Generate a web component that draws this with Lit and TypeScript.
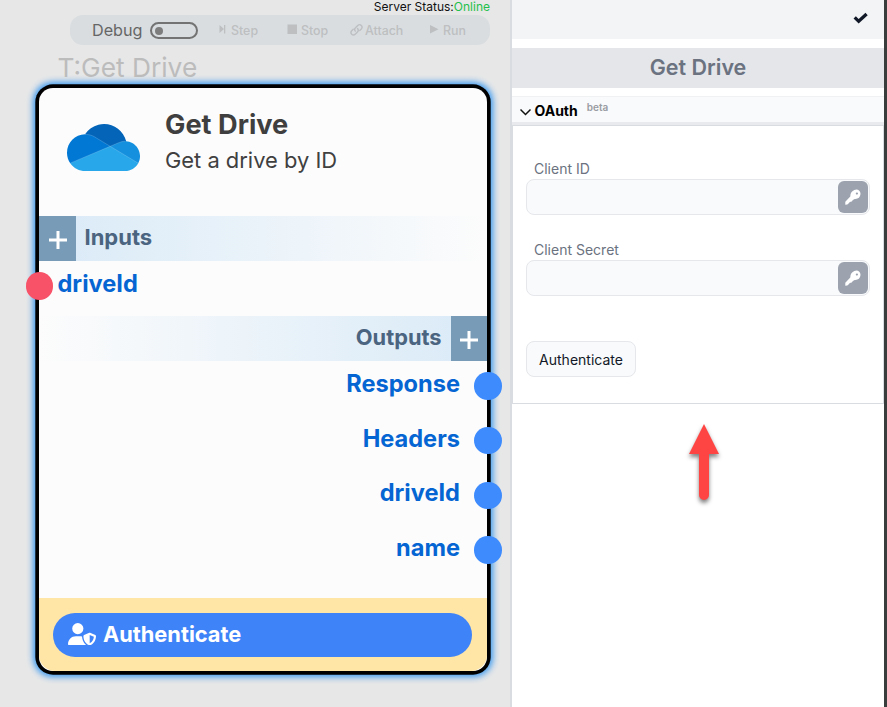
import { LitElement, html, css, svg } from "lit";
import { customElement, property } from "lit/decorators.js";

const keyIcon = svg`<path fill="#fff" fill-rule="evenodd" d="M9.400 1.100C12-.6 15.700 1.400 15.500 5c-.2 3.400-2.700 5.200-5.800 4.900L7.900 11 6.700 12.400 4.800 13 3.800 14.200 2.300 15.400.3 15.700V12.700L5.300 7.400C5.200 4.300 6.900 2.200 9.400 1.100zM11.900 3.500a1 1 0 1 0 .01 0z"/>`;

@customElement("flow-toolbar")
class FlowToolbar extends LitElement {
  static styles = css`
    :host { display: block; color: #bdbfc1; }
    .bar { display: flex; align-items: center; height: 30px; width: 420px; box-sizing: border-box; border-radius: 13px; background: #d9dde0; padding-left: 22px; }
    .debug { font-size: 16.200px; color: #666; width: 58px; line-height: 29px; }
    .toggle { width: 48px; height: 17px; box-sizing: border-box; border: 2px solid #737373; border-radius: 9px; display: flex; align-items: center; padding-left: 3px; margin-right: 20px; margin-top: 1px; }
    .dot { width: 8px; height: 8px; border-radius: 50%; background: #7d7d7d; }
    .item { display: flex; align-items: center; font-size: 12.400px; font-weight: 500; line-height: 29px; }
    .step { width: 69px; }
    .stop { width: 62px; }
    .attach { width: 80px; }
    svg { display: block; flex: none; }
  `;
  render() {
    return html`<div class="bar">
      <span class="debug">Debug</span>
      <span class="toggle"><span class="dot"></span></span>
      <span class="item step"><svg width="13" height="12"><path d="M1.500 1l4.500 4-4.500 4zM6 1h1.300v8.500H6z" fill="currentColor"/></svg>Step</span>
      <span class="item stop"><svg width="14" height="12"><path d="M.5 .5H10V10H.5z" fill="currentColor"/></svg>Stop</span>
      <span class="item attach"><svg width="16" height="14" viewBox="0 0 16 14"><g fill="none" stroke="currentColor" stroke-width="1.400" stroke-linecap="round"><path d="M6.300 8.100A2.500 2.500 0 0 1 6.500 4.700L9 2.200a2.500 2.500 0 0 1 3.500 3.500l-1.700 1.700"/><path d="M8.500 5.400a2.500 2.500 0 0 1 0 3.500L6 11.400a2.500 2.500 0 0 1-3.500-3.500l1.700-1.700"/></g></svg>Attach</span>
      <span class="item"><svg width="14" height="12"><path d="M1 1l8.500 4.200L1 9.400z" fill="currentColor"/></svg>Run</span>
    </div>`;
  }
}

@customElement("flow-node")
class FlowNode extends LitElement {
  static styles = css`
    :host { display: block; }
    .node { width: 448px; height: 583px; display: flex; flex-direction: column; background: #fcfcfc; border-radius: 14px; box-shadow: 0 0 0 3.7px #000, 0 0 6px 6px #3b99f0; }
    .head { display: flex; height: 127.5px; box-sizing: border-box; padding: 36px 0 0 28px; }
    .logo { width: 73px; height: 47px; margin-right: 25px; flex: none; }
    .name { font-size: 27.2px; font-weight: 700; line-height: 36px; margin-top: -17px; color: #3f3f3f; }
    .desc { font-size: 21.9px; line-height: 32px; margin-top: 1px; color: #404040; }
    .section { height: 45.5px; display: flex; align-items: stretch; font-size: 22px; font-weight: 700; color: #4b6480; line-height: 43px; background: linear-gradient(90deg, #d9eaf7, #fcfcfc); }
    .outs { background: linear-gradient(270deg, #d9eaf7, #fcfcfc); justify-content: flex-end; font-size: 21.800px; }
    .plus { width: 36.5px; background: #789bb7; display: flex; align-items: center; justify-content: center; padding: 3px 0 0 1px; box-sizing: border-box; }
    .label { padding: 0 9px; }
    .port { position: relative; height: 54.6px; font-size: 23.6px; font-weight: 700; color: #0565d2; line-height: 46.400px; box-sizing: border-box; }
    .in { padding-left: 18.500px; }
    .out { text-align: right; padding-right: 27px; }
    .port::after { content: ""; position: absolute; top: 11.300px; width: 27.400px; height: 27.400px; border-radius: 50%; }
    .in::after { left: -13px; background: #f75267; }
    .out::after { right: -14.700px; background: #3d8bfd; }
    .foot { margin-top: auto; height: 73px; box-sizing: border-box; padding: 15px 14.600px 14px 14.400px; background: #ffe6a7; border-radius: 0 0 16px 16px; }
    .auth { height: 44px; border-radius: 22px; background: #3f83f8; color: #fff; display: flex; align-items: center; padding-left: 15px; gap: 6.500px; font-size: 21.800px; font-weight: 700; line-height: 26px; }
    .auth svg { margin-top: -2px; }
    .auth span { margin-top: -2px; }
  `;
  render() {
    const plus = html`<span class="plus"><svg width="18" height="18"><path d="M9 0v18M0 9h18" stroke="#fff" stroke-width="3"/></svg></span>`;
    return html`<div class="node">
      <div class="head">
        <svg class="logo" viewBox="0 0 1030 660" preserveAspectRatio="none">
          <path fill="#0364B8" d="M622.292 445.338l212.613-203.327C790.741 69.804 615.338-33.996 443.130 10.168 365.580 30.056 298.224 78.130 254.209 145.005 257.500 144.922 622.292 445.338 622.292 445.338z"/>
          <path fill="#0078D4" d="M392.776 183.283l-.01.035c-40.626-25.162-87.479-38.462-135.267-38.397-1.104 0-2.189.070-3.291.083C112.064 146.765-1.740 263.423.020 405.567c.638 51.562 16.749 101.743 46.244 144.040l318.528-39.894 244.209-196.915z"/>
          <path fill="#1490DF" d="M834.905 242.012c-4.674-.312-9.371-.528-14.123-.528-28.523-.028-56.749 5.798-82.930 17.117l-.006-.022-128.844 54.220 142.041 175.456 253.934 61.728c54.799-101.732 16.752-228.625-84.980-283.424-26.895-14.487-55.716-22.468-85.092-24.547z"/>
          <path fill="#28A8EA" d="M46.264 549.607C94.359 618.756 173.270 659.966 257.500 659.922h563.281c76.946.022 147.691-42.202 184.195-109.937L609.001 312.798z"/>
          <path fill="none" stroke="#fff" stroke-opacity=".28" stroke-width="9" d="M46 549L609 313l129-54c26-11 54-17 83-17M254 145c49 0 98 13 139 38l216 130 396 237"/>
        </svg>
        <div><div class="name">Get Drive</div><div class="desc">Get a drive by ID</div></div>
      </div>
      <div class="section">${plus}<span class="label">Inputs</span></div>
      <div class="port in">driveId</div>
      <div class="section outs"><span class="label">Outputs</span>${plus}</div>
      ${["Response", "Headers", "driveId", "name"].map((n) => html`<div class="port out">${n}</div>`)}
      <div class="foot"><div class="auth">
        <svg width="28" height="22.400" viewBox="0 0 640 512"><path fill="currentColor" d="M224 256A128 128 0 1 0 224 0a128 128 0 1 0 0 256zm-45.700 48C79.800 304 0 383.800 0 482.300 0 498.700 13.300 512 29.700 512h388.600c1.800 0 3.500-.2 5.300-.5-76.300-55.100-99.800-141-103.100-200.200-16.100-4.800-33.100-7.300-50.700-7.300h-91.500zm308.800-78.300l-120 48C358 277.400 352 286.200 352 296c0 63.300 25.900 168.800 134.800 214.200 5.900 2.500 12.600 2.500 18.500 0C614.100 464.800 640 359.300 640 296c0-9.800-6-18.600-15.100-22.300l-120-48c-5.700-2.300-12.100-2.300-17.800 0zM591.400 312c-3.900 50.700-27.200 116.700-95.400 149.700V273.800z"/></svg>
        <span>Authenticate</span></div></div>
    </div>`;
  }
}

@customElement("secret-field")
class SecretField extends LitElement {
  @property() label = "";
  static styles = css`
    :host { display: block; height: 81px; }
    .label { font-size: 14px; line-height: 20px; color: #6b7280; padding-left: 8px; }
    .box { height: 36px; box-sizing: border-box; border: 1px solid #e5e7eb; border-radius: 8px; background: #f9fafb; display: flex; justify-content: flex-end; align-items: center; padding-right: 1px; }
    .key { width: 30px; height: 32px; border-radius: 6px; background: #9ca3af; display: flex; align-items: center; justify-content: center; }
  `;
  render() {
    return html`<div class="label">${this.label}</div>
      <div class="box"><span class="key"><svg width="16" height="16" viewBox="0 0 16 16">${keyIcon}</svg></span></div>`;
  }
}

@customElement("app-root")
class AppRoot extends LitElement {
  static styles = css`
    :host { display: flex; width: 887px; height: 707px; overflow: hidden; font-family: Inter, sans-serif; background: #fff; }
    .canvas { width: 510px; flex: none; background: #e7e7e7; box-sizing: border-box; position: relative; z-index: 1; box-shadow: 2px 0 #d9dce1; }
    .status { height: 15px; line-height: 14px; font-size: 12px; text-align: right; padding-right: 20px; color: #111; }
    .online { color: #1fc04b; }
    flow-toolbar { margin-left: 70px; }
    .title { font-size: 26.300px; line-height: 45px; height: 43px; padding-left: 57.500px; color: #bcbcbc; }
    flow-node { margin-left: 39px; }
    .panel { flex: 1; margin-left: 2px; border-right: 3px solid #393d3c; min-width: 0; }
    .top { height: 39px; background: #f3f4f6; display: flex; justify-content: flex-end; padding: 11px 15px 0 0; box-sizing: border-box; }
    .band { margin-top: 9px; height: 40px; line-height: 39px; background: #e5e6ea; color: #6b7280; font-size: 21.500px; font-weight: 600; text-align: center; }
    .group { margin-top: 8px; height: 29px; box-sizing: border-box; background: #f9fafb; border-top: 1px solid #f0f1f3; border-bottom: 3px solid #e8eaee; display: flex; padding-left: 8px; font-size: 14px; font-weight: 650; line-height: 28px; color: #000; }
    .group svg { margin: 10px 3.500px 0 0; }
    .beta { font-size: 10px; font-weight: 600; line-height: 21px; margin-left: 9px; color: #9a9da3; }
    .body { height: 279px; box-sizing: border-box; border: 1px solid #d9dce1; padding: 33px 13px 0; }
    .btn { display: flex; align-items: center; justify-content: center; width: 110px; height: 36px; margin-top: 20px; box-sizing: border-box; border: 1px solid #e5e7eb; border-radius: 8px; background: #f9fafb; font-size: 14px; color: #111827; }
    .arrow { display: block; margin: 14px 0 0 167px; filter: drop-shadow(0 3px 2px rgba(0, 0, 0, 0.5)); overflow: visible; }
  `;
  render() {
    return html`
      <div class="canvas">
        <div class="status">Server Status:<span class="online">Online</span></div>
        <flow-toolbar></flow-toolbar>
        <div class="title">T:Get Drive</div>
        <flow-node></flow-node>
      </div>
      <div class="panel">
        <div class="top"><svg width="16" height="14"><path d="M1.700 6.300l4 4L13.600 3" fill="none" stroke="#111827" stroke-width="3.300"/></svg></div>
        <div class="band">Get Drive</div>
        <div class="group"><svg width="11" height="10"><path d="M.5 2.500l5 5 5-5" fill="none" stroke="#111" stroke-width="1.500"/></svg>OAuth<span class="beta">beta</span></div>
        <div class="body">
          <secret-field label="Client ID"></secret-field>
          <secret-field label="Client Secret"></secret-field>
          <div class="btn">Authenticate</div>
        </div>
        <svg class="arrow" width="50" height="90"><path d="M25 6l15 30H30v41a5 5 0 0 1-10 0V36H10z" fill="#ff4444"/></svg>
      </div>`;
  }
}
